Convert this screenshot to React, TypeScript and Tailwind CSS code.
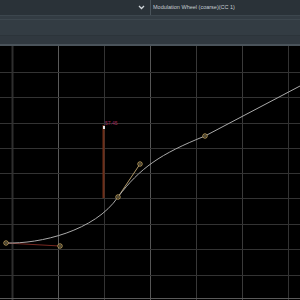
import React from 'react';

// Envelope / curve editor panel
const vLines = [
  { x: 12.5, c: '#2e2e2e', w: 2 },
  { x: 58.5, c: '#5a5a5a', w: 1 },
  { x: 104.5, c: '#333333', w: 1 },
  { x: 150.5, c: '#555555', w: 1 },
  { x: 196.5, c: '#383838', w: 1 },
  { x: 242.5, c: '#3a3a3a', w: 1 },
  { x: 288.5, c: '#333333', w: 1 },
];
const hLines = [26.5, 51.5, 77.5, 102.5, 127.5, 152.5, 178.5, 203.5, 229.5];

const nodes: [number, number][] = [
  [6, 197],
  [60, 200],
  [118, 151],
  [140, 118],
  [205, 90],
];

const App: React.FC = () => {
  return (
    <div className="w-[300px] h-[300px] flex flex-col bg-black overflow-hidden" style={{ fontFamily: '"Liberation Sans", Arial, sans-serif' }}>
      {/* Top selector row */}
      <div className="h-[16px] flex bg-[#2a3238] border-b border-[#3c464d]">
        <div className="flex-1 flex items-center justify-end pr-[5px]">
          <svg width="7" height="5" viewBox="0 0 7 5">
            <path d="M1 1 L3.5 3.5 L6 1" stroke="#d0d6da" strokeWidth="1.3" fill="none" />
          </svg>
        </div>
        <div className="w-px bg-[#4a545b]" />
        <div className="w-[149px] flex items-center pl-[2px] text-[5.5px] text-[#c4ccd1] whitespace-nowrap">
          Modulation Wheel (coarse)(CC 1)
        </div>
      </div>
      {/* Toolbar strip */}
      <div className="h-[28px] flex flex-col bg-[#333c43]">
        <div className="h-[4px] border-b border-[#3d474e]" />
        <div className="flex-1 border-b border-[#2c343a]" />
        <div className="h-[8px] bg-[#30383f]" />
      </div>
      <div className="h-[2px] bg-[#4a535a]" />
      {/* Graph */}
      <div className="flex-1 relative">
        <svg width="300" height="254" viewBox="0 0 300 254" className="block">
          {vLines.map((l) => (
            <line key={l.x} x1={l.x} y1={0} x2={l.x} y2={254} stroke={l.c} strokeWidth={l.w} />
          ))}
          {hLines.map((y) => (
            <line key={y} x1={0} y1={y} x2={300} y2={y} stroke="#333333" strokeWidth="1" />
          ))}
          <line x1={0} y1={252.5} x2={300} y2={252.5} stroke="#5a5a5a" strokeWidth="1" />

          {/* position marker */}
          <rect x={102.5} y={79} width={2} height={73} fill="#6e2e18" />
          <rect x={103} y={80} width={2} height={3} fill="#e8e8e8" />
          <text x={105} y={79} fontSize="5" fill="#a02a5a">57.45</text>

          {/* handles */}
          <line x1={6} y1={197} x2={60} y2={200} stroke="#7a2a22" strokeWidth="1" />
          <line x1={118} y1={151} x2={140} y2={118} stroke="#b09868" strokeWidth="1" />

          {/* curve */}
          <path
            d="M6 197 C40 198 95 185 118 151 C140 122 160 108 205 90 L300 40"
            stroke="#aaaaaa"
            strokeWidth="1"
            fill="none"
          />

          {nodes.map(([x, y]) => (
            <g key={`${x}-${y}`}>
              <circle cx={x} cy={y} r={2.2} fill="#000" stroke="#cfb06a" strokeWidth="0.9" />
              <circle cx={x} cy={y} r={0.7} fill="#e0d0a0" />
            </g>
          ))}
        </svg>
      </div>
    </div>
  );
};

export default App;
